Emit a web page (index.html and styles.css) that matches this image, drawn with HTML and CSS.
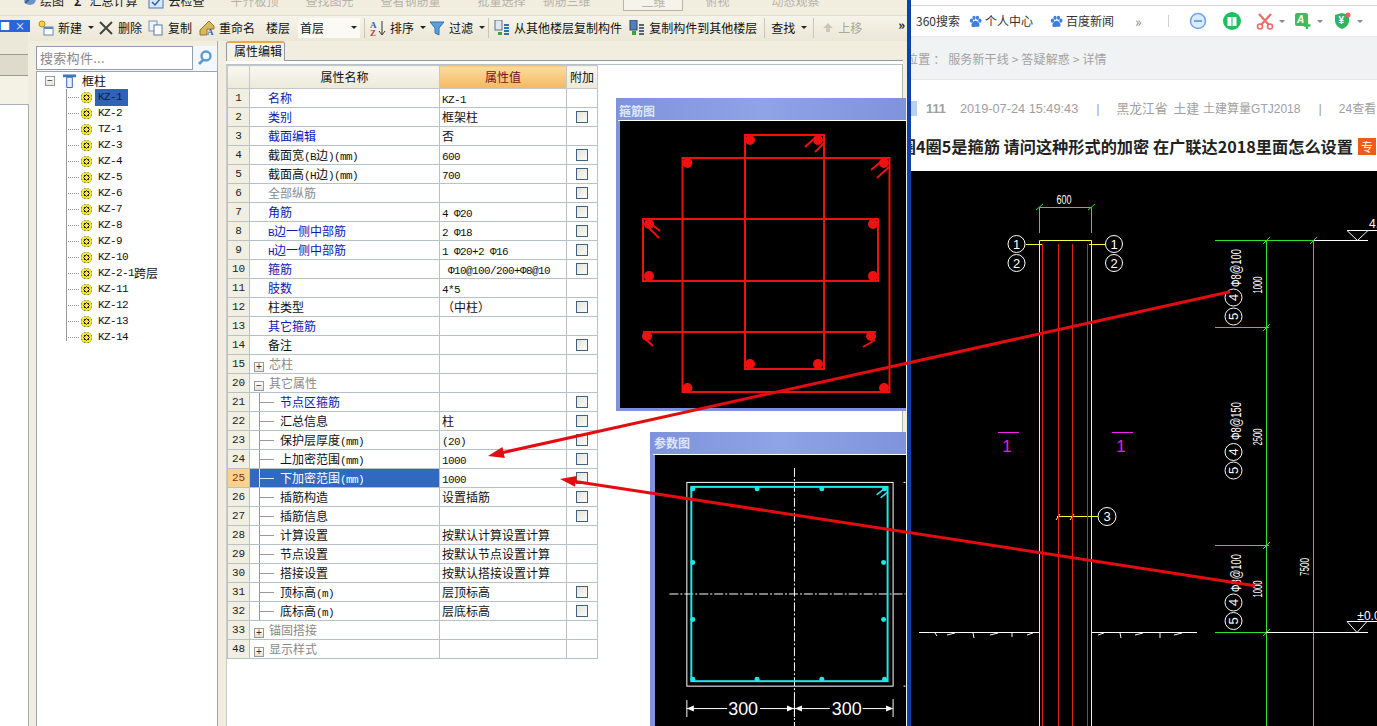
FILE: index.html
```html
<!DOCTYPE html>
<html lang="zh-CN">
<head>
<meta charset="utf-8">
<title>属性编辑</title>
<link rel="stylesheet" href="styles.css">
</head>
<body>
<div class="screen">
  <div class="app">
    <div class="tb1">
      <svg class="ic i1a" viewBox="0 0 16 16"><circle cx="8" cy="6" r="6" fill="#6f93c8"/><path d="M3 10 13 1" stroke="#3a5f96" stroke-width="2"/></svg><span class="t1 m40">绘图</span>
      <span class="t1 sigma">Σ</span><span class="t1">汇总计算</span>
      <svg class="ic i1b" viewBox="0 0 16 16"><rect x="1" y="0" width="14" height="12" fill="#d8e8f8" stroke="#3c78c0"/><path d="M4 6l3 3 5-6" stroke="#2a60b0" stroke-width="1.5" fill="none"/></svg><span class="t1">云检查</span>
      <span class="t1 dim m230">平齐板顶</span><span class="t1 dim m305">查找图元</span><span class="t1 dim m380">查看钢筋量</span><span class="t1 dim m478">批量选择</span><span class="t1 dim m543">钢筋三维</span>
      <span class="view-select">二维</span>
      <span class="t1 dim m705">俯视</span><span class="t1 dim m771">动态观察</span>
    </div>
    <div class="main">
      <aside class="dock">
        <div class="dock-gap"></div>
        <div class="dock-title"><span>■</span><span>×</span></div>
        <div class="dock-a"></div>
        <div class="dock-b"></div>
        <div class="dock-c"></div>
        <div class="dock-white"></div>
      </aside>
      <div class="content">
        <div class="tb2">
          <span class="tool w-new"><svg class="ic" viewBox="0 0 16 16"><circle cx="4" cy="4" r="3" fill="#f4d03f" stroke="#b09020"/><rect x="6" y="7" width="9" height="8" fill="#fff" stroke="#6088b8"/><rect x="6" y="7" width="9" height="2" fill="#6088b8"/></svg>新建<i class="caret"></i></span>
          <span class="tool w-del"><svg class="ic" viewBox="0 0 16 16"><path d="M2 2 14 14M14 2 2 14" stroke="#444" stroke-width="2"/></svg>删除</span>
          <span class="tool w-copy"><svg class="ic" viewBox="0 0 16 16"><rect x="1" y="1" width="8" height="10" fill="#eef3fa" stroke="#7a94b8"/><rect x="6" y="5" width="8" height="10" fill="#fff" stroke="#5a78a8"/></svg>复制</span>
          <span class="tool w-ren"><svg class="ic" viewBox="0 0 16 16"><path d="M1 10 10 1l5 5v3H8v6H1z" fill="#d8b860" stroke="#907830"/><text x="8" y="15" class="ic-text">A</text></svg>重命名</span>
          <span class="tool w-floor">楼层</span>
          <span class="combo">首层<i class="caret"></i></span>
          <i class="sep s-combo"></i>
          <span class="tool w-sort"><svg class="ic" viewBox="0 0 16 16"><text x="0" y="8" class="ic-az">A</text><text x="0" y="16" class="ic-az red">Z</text><path d="M12 1v13M9 11l3 4 3-4" stroke="#333" fill="none"/></svg>排序<i class="caret"></i></span>
          <span class="tool w-filter"><svg class="ic" viewBox="0 0 16 16"><path d="M1 2h14L10 8v7l-4-2V8z" fill="#58a0e0" stroke="#3070b0"/></svg>过滤<i class="caret"></i></span>
          <i class="sep s-filter"></i>
          <span class="tool w-from"><svg class="ic" viewBox="0 0 16 16"><rect x="1" y="0" width="7" height="10" fill="#dfe6f0" stroke="#5a6f90"/><path d="M4 12h4v3H4z" fill="#40a040"/><path d="M10 5h5M10 8h5M10 11h5M10 14h5" stroke="#3070b0" stroke-width="2"/></svg>从其他楼层复制构件</span>
          <span class="tool w-to"><svg class="ic" viewBox="0 0 16 16"><rect x="1" y="0" width="7" height="10" fill="#5080c0" stroke="#345"/><path d="M3 11h4v4H3z" fill="#40a040"/><path d="M10 5h5M10 8h5M10 11h5M10 14h5" stroke="#567" stroke-width="2"/></svg>复制构件到其他楼层</span>
          <i class="sep s-find"></i>
          <span class="tool">查找<i class="caret"></i></span>
          <i class="sep s-up"></i>
          <span class="tool dim w-up"><svg class="ic" viewBox="0 0 16 16"><path d="M8 3l5 5h-3v4H6V8H3z" fill="#ccc8b8"/></svg>上移</span>
          <span class="more">»</span>
        </div>
        <div class="workspace">
          <section class="tree-panel">
            <div class="search"><span class="search-box">搜索构件...</span><svg class="search-ic" viewBox="0 0 16 16"><circle cx="9" cy="6" r="4.5" fill="none" stroke="#5f9bd0" stroke-width="2.4"/><path d="M6 10 2 14" stroke="#5f9bd0" stroke-width="2.6"/></svg></div>
            <div class="tree">
              <div class="tree-root"><span class="box">−</span><svg class="col-ic" viewBox="0 0 16 16"><path d="M1 1h14v3H1z" fill="#3f78c8"/><path d="M5 4h6v11H5z" fill="#e6f0fb" stroke="#2f5fa8"/></svg>框柱</div>
              <ul class="tree-list">
                <li><i class="gear"></i><span class="lat sel">KZ-1</span></li>
                <li><i class="gear"></i><span class="lat">KZ-2</span></li>
                <li><i class="gear"></i><span class="lat">TZ-1</span></li>
                <li><i class="gear"></i><span class="lat">KZ-3</span></li>
                <li><i class="gear"></i><span class="lat">KZ-4</span></li>
                <li><i class="gear"></i><span class="lat">KZ-5</span></li>
                <li><i class="gear"></i><span class="lat">KZ-6</span></li>
                <li><i class="gear"></i><span class="lat">KZ-7</span></li>
                <li><i class="gear"></i><span class="lat">KZ-8</span></li>
                <li><i class="gear"></i><span class="lat">KZ-9</span></li>
                <li><i class="gear"></i><span class="lat">KZ-10</span></li>
                <li><i class="gear"></i><span class="lat">KZ-2-1</span>跨层</li>
                <li><i class="gear"></i><span class="lat">KZ-11</span></li>
                <li><i class="gear"></i><span class="lat">KZ-12</span></li>
                <li><i class="gear"></i><span class="lat">KZ-13</span></li>
                <li><i class="gear"></i><span class="lat">KZ-14</span></li>
              </ul>
            </div>
          </section>
          <section class="prop-panel">
            <div class="tabs"><span class="tab">属性编辑</span></div>
            <div class="tab-body">
              <table class="props">
                <colgroup><col class="c-i"><col class="c-n"><col class="c-v"><col class="c-a"></colgroup>
                <thead><tr><th></th><th>属性名称</th><th class="hot">属性值</th><th>附加</th></tr></thead>
                <tbody>
                  <tr><td class="idx">1</td><td class="nm blue">名称</td><td class="val"><span class="lat">KZ-1</span></td><td></td></tr>
                  <tr><td class="idx">2</td><td class="nm blue">类别</td><td class="val">框架柱</td><td><i class="chk"></i></td></tr>
                  <tr><td class="idx">3</td><td class="nm blue">截面编辑</td><td class="val">否</td><td></td></tr>
                  <tr><td class="idx">4</td><td class="nm">截面宽<span class="lat">(B</span>边<span class="lat">)(mm)</span></td><td class="val"><span class="lat">600</span></td><td><i class="chk"></i></td></tr>
                  <tr><td class="idx">5</td><td class="nm">截面高<span class="lat">(H</span>边<span class="lat">)(mm)</span></td><td class="val"><span class="lat">700</span></td><td><i class="chk"></i></td></tr>
                  <tr><td class="idx">6</td><td class="nm gray">全部纵筋</td><td class="val"></td><td><i class="chk"></i></td></tr>
                  <tr><td class="idx">7</td><td class="nm blue">角筋</td><td class="val"><span class="lat">4 Φ20</span></td><td><i class="chk"></i></td></tr>
                  <tr><td class="idx">8</td><td class="nm blue"><span class="lat">B</span>边一侧中部筋</td><td class="val"><span class="lat">2 Φ18</span></td><td><i class="chk"></i></td></tr>
                  <tr><td class="idx">9</td><td class="nm blue"><span class="lat">H</span>边一侧中部筋</td><td class="val"><span class="lat">1 Φ20+2 Φ16</span></td><td><i class="chk"></i></td></tr>
                  <tr><td class="idx">10</td><td class="nm blue">箍筋</td><td class="val clip"><span class="lat"> Φ10@100/200+Φ8@10</span></td><td><i class="chk"></i></td></tr>
                  <tr><td class="idx">11</td><td class="nm blue">肢数</td><td class="val"><span class="lat">4*5</span></td><td></td></tr>
                  <tr><td class="idx">12</td><td class="nm">柱类型</td><td class="val">（中柱）</td><td><i class="chk"></i></td></tr>
                  <tr><td class="idx">13</td><td class="nm blue">其它箍筋</td><td class="val"></td><td></td></tr>
                  <tr><td class="idx">14</td><td class="nm">备注</td><td class="val"></td><td><i class="chk"></i></td></tr>
                  <tr><td class="idx">15</td><td class="nm gray grp"><span class="box">+</span>芯柱</td><td class="val"></td><td></td></tr>
                  <tr><td class="idx">20</td><td class="nm gray grp"><span class="box">−</span>其它属性</td><td class="val"></td><td></td></tr>
                  <tr><td class="idx">21</td><td class="nm kid blue">节点区箍筋</td><td class="val"></td><td><i class="chk"></i></td></tr>
                  <tr><td class="idx">22</td><td class="nm kid">汇总信息</td><td class="val">柱</td><td><i class="chk"></i></td></tr>
                  <tr><td class="idx">23</td><td class="nm kid">保护层厚度<span class="lat">(mm)</span></td><td class="val"><span class="lat">(20)</span></td><td><i class="chk"></i></td></tr>
                  <tr><td class="idx">24</td><td class="nm kid">上加密范围<span class="lat">(mm)</span></td><td class="val"><span class="lat">1000</span></td><td><i class="chk"></i></td></tr>
                  <tr class="active"><td class="idx">25</td><td class="nm kid">下加密范围<span class="lat">(mm)</span></td><td class="val"><span class="lat">1000</span></td><td><i class="chk"></i></td></tr>
                  <tr><td class="idx">26</td><td class="nm kid">插筋构造</td><td class="val">设置插筋</td><td><i class="chk"></i></td></tr>
                  <tr><td class="idx">27</td><td class="nm kid">插筋信息</td><td class="val"></td><td><i class="chk"></i></td></tr>
                  <tr><td class="idx">28</td><td class="nm kid">计算设置</td><td class="val">按默认计算设置计算</td><td></td></tr>
                  <tr><td class="idx">29</td><td class="nm kid">节点设置</td><td class="val">按默认节点设置计算</td><td></td></tr>
                  <tr><td class="idx">30</td><td class="nm kid">搭接设置</td><td class="val">按默认搭接设置计算</td><td></td></tr>
                  <tr><td class="idx">31</td><td class="nm kid">顶标高<span class="lat">(m)</span></td><td class="val">层顶标高</td><td><i class="chk"></i></td></tr>
                  <tr><td class="idx">32</td><td class="nm kid">底标高<span class="lat">(m)</span></td><td class="val">层底标高</td><td><i class="chk"></i></td></tr>
                  <tr><td class="idx">33</td><td class="nm gray grp"><span class="box">+</span>锚固搭接</td><td class="val"></td><td></td></tr>
                  <tr><td class="idx">48</td><td class="nm gray grp"><span class="box">+</span>显示样式</td><td class="val"></td><td></td></tr>
                </tbody>
              </table>
            </div>
          </section>
        </div>
      </div>
    </div>
  </div>
  <div class="edge"></div>
  <div class="browser">
    <div class="b-top"></div>
    <nav class="bookmarks">
      <span class="bm first">360搜索</span>
      <span class="bm"><svg class="paw" viewBox="0 0 16 16"><ellipse cx="3" cy="7" rx="2" ry="2.6"/><ellipse cx="6.2" cy="3.4" rx="2" ry="2.6"/><ellipse cx="10.4" cy="3.4" rx="2" ry="2.6"/><ellipse cx="13.4" cy="7" rx="2" ry="2.6"/><path d="M8 7c-3 0-5 3-5 5.5S5 15 8 14.500 13 15 13 12.500 11 7 8 7z"/></svg>个人中心</span>
      <span class="bm bm3"><svg class="paw" viewBox="0 0 16 16"><ellipse cx="3" cy="7" rx="2" ry="2.6"/><ellipse cx="6.2" cy="3.4" rx="2" ry="2.6"/><ellipse cx="10.4" cy="3.4" rx="2" ry="2.6"/><ellipse cx="13.4" cy="7" rx="2" ry="2.6"/><path d="M8 7c-3 0-5 3-5 5.5S5 15 8 14.500 13 15 13 12.500 11 7 8 7z"/></svg>百度新闻</span>
      <span class="chev">»</span>
      <i class="bm-sep"></i>
      <svg class="bi bi1" viewBox="0 0 18 18"><circle cx="9" cy="9" r="7.500" fill="#dcebfb" stroke="#6aa5e6" stroke-width="1.500"/><path d="M5 9h8" stroke="#6aa5e6" stroke-width="2"/></svg>
      <svg class="bi bi2" viewBox="0 0 18 18"><circle cx="9" cy="9" r="9" fill="#19c15f"/><path d="M4.500 5h4v9h-4zM9.500 5h4v9h-4z" fill="#fff"/></svg>
      <svg class="bi bi3" viewBox="0 0 18 18"><path d="M3 2l10 11M15 2 5 13" stroke="#f06a6a" stroke-width="2.200"/><circle cx="4" cy="14.500" r="2.500" fill="none" stroke="#f06a6a" stroke-width="1.600"/><circle cx="14" cy="14.500" r="2.500" fill="none" stroke="#f06a6a" stroke-width="1.600"/></svg><i class="caret g"></i>
      <svg class="bi bi4" viewBox="0 0 18 18"><rect x="1" y="1" width="13" height="13" rx="2" fill="#43b85c"/><text x="3" y="11" class="ic-a">A</text><path d="M13 10v7M9.500 13.500h7" stroke="#43b85c" stroke-width="2.400"/></svg><i class="caret g"></i>
      <svg class="bi bi5" viewBox="0 0 18 18"><path d="M1 3 8 1l7 2v6c0 4-4 7-7 8-3-1-7-4-7-8z" fill="#2fb45a"/><text x="4.500" y="12" class="ic-y">¥</text><circle cx="14" cy="3" r="2.500" fill="#f0605a"/></svg><i class="caret g"></i>
    </nav>
    <div class="crumbs"><span class="crumb-clip">位置 ： 服务新干线 &gt; 答疑解惑 &gt; 详情</span></div>
    <div class="info">
      <span class="bookmark-ic"></span><span class="i-user">111</span><span class="i-date">2019-07-24 15:49:43</span><span class="i-bar">|</span><span class="i-area">黑龙江省</span><span class="i-tag">土建</span><span class="i-tag2">土建算量GTJ2018</span><span class="i-bar b2">|</span><span class="i-views">24查看</span>
    </div>
    <h1 class="q-title"><span>圈4圈5是箍筋 请问这种形式的加密 在广联达2018里面怎么设置</span><b class="badge">专</b></h1>
    <div class="cad">
      <svg class="cad-svg" viewBox="911 171 466 555">
        <g class="g-green">
          <path d="M1039.500 207.500H1091.500M1039.500 207.500V233M1091.500 207.500V233"/>
          <path d="M1036 210l7-6M1088 210l7-6"/>
          <path d="M1215 240.500H1313.500M1266.500 240.500V726M1313.500 240.500V726M1215 327.500H1269M1215 545.500H1269M1215 632.500H1266.500"/>
          <path d="M1263 244l7-7M1310 244l7-7M1263 331l7-7M1263 549l7-7M1263 636l7-7"/>
        </g>
        <g class="g-yellow">
          <path d="M1039.500 240.500H1091.500M1039.500 240.500V726M1091.500 240.500V726"/>
          <path d="M1026 244.500H1042M1089 244.500H1105M1057 516.500H1098M1056 520l4-6M1070 520l4-6"/>
        </g>
        <path class="g-red" d="M1042.500 244V726M1058.500 244V726M1072.500 244V726M1087.500 244V726"/>
        <g class="g-white">
          <circle cx="1016.500" cy="244" r="8.500"/><circle cx="1016.500" cy="263" r="8.500"/><circle cx="1114" cy="244" r="8.500"/><circle cx="1114" cy="263" r="8.500"/>
          <circle cx="1107" cy="516.500" r="9"/>
          <circle cx="1233.500" cy="297.500" r="8.500"/><circle cx="1233.500" cy="316.500" r="8.500"/>
          <circle cx="1233.500" cy="452" r="8.500"/><circle cx="1233.500" cy="470.500" r="8.500"/>
          <circle cx="1233.500" cy="602.500" r="8.500"/><circle cx="1233.500" cy="621" r="8.500"/>
          <path d="M1314 240.500H1368M1347 230.500H1377M1347 230.500 1357.500 240.500 1368 230.500"/>
          <path d="M1266.500 632.500H1368M1347 621.500H1377M1347 621.500 1357 632.500 1367 621.500"/>
          <path d="M919 632.500H1039M1092 632.500H1197"/>
          <path d="M935 633l2 3M947 635l8-2M973 633l1 5M990 635l8-2M1012 633l0 4M1027 635l6-2M1098 635l6-2M1120 633l1 5M1135 635l8-2M1160 633l0 5M1174 635l8-2"/>
        </g>
        <path class="g-mag" d="M998 432.500H1019M1112 432.500H1133"/>
        <text x="1007" y="452" class="t-mag">1</text>
        <text x="1121" y="452" class="t-mag">1</text>
        <g class="t-cad">
          <text x="1064" y="204" class="t-s" textLength="15" lengthAdjust="spacingAndGlyphs">600</text>
          <text x="1016.500" y="248.500">1</text><text x="1016.500" y="267.500">2</text><text x="1114" y="248.500">1</text><text x="1114" y="267.500">2</text>
          <text x="1107" y="521">3</text>
          <text x="1374" y="228" class="t-s">4.</text>
          <text x="1369" y="620" class="t-s">±0.0</text>
          <text transform="translate(1241 268) rotate(-90)" class="t-l" textLength="38" lengthAdjust="spacingAndGlyphs">Φ8@100</text>
          <text transform="translate(1241 421) rotate(-90)" class="t-l" textLength="38" lengthAdjust="spacingAndGlyphs">Φ8@150</text>
          <text transform="translate(1241 573) rotate(-90)" class="t-l" textLength="38" lengthAdjust="spacingAndGlyphs">Φ8@100</text>
          <text transform="translate(1262 285) rotate(-90)" class="t-s" textLength="17" lengthAdjust="spacingAndGlyphs">1000</text>
          <text transform="translate(1262 437) rotate(-90)" class="t-s" textLength="17" lengthAdjust="spacingAndGlyphs">2500</text>
          <text transform="translate(1262 589) rotate(-90)" class="t-s" textLength="17" lengthAdjust="spacingAndGlyphs">1000</text>
          <text transform="translate(1309 567) rotate(-90)" class="t-s" textLength="18" lengthAdjust="spacingAndGlyphs">7500</text>
          <text transform="translate(1238 297.500) rotate(-90)">4</text>
          <text transform="translate(1238 316.500) rotate(-90)">5</text>
          <text transform="translate(1238 452) rotate(-90)">4</text>
          <text transform="translate(1238 470.500) rotate(-90)">5</text>
          <text transform="translate(1238 602.500) rotate(-90)">4</text>
          <text transform="translate(1238 621) rotate(-90)">5</text>
        </g>
      </svg>
    </div>
  </div>

  <div class="win win-a">
    <div class="win-title">箍筋图</div>
    <svg class="win-draw" viewBox="620 121 286 287">
      <g class="rebar">
        <rect x="682.500" y="158" width="207" height="234"/>
        <rect x="745" y="135" width="79" height="234"/>
        <rect x="643" y="219" width="235" height="62"/>
        <path d="M643 332H876"/>
        <path class="hook" d="M805 147l12-11M815 152l9-9M871 170l13-11M877 178l12-11M650 223l10 8M647 226l12 12M643 337l10 9M875 340l-12 7"/>
      </g>
      <g class="rebar-dots">
        <circle cx="750" cy="140" r="5"/><circle cx="818" cy="140" r="5"/><circle cx="687.500" cy="163" r="5"/><circle cx="884" cy="163" r="5"/>
        <circle cx="649" cy="224" r="5"/><circle cx="873" cy="224" r="5"/><circle cx="649" cy="276" r="5"/><circle cx="873" cy="276" r="5"/>
        <circle cx="647" cy="336" r="5"/><circle cx="871" cy="336" r="5"/><circle cx="750" cy="364" r="5"/><circle cx="818" cy="364" r="5"/><circle cx="687.500" cy="388" r="5"/><circle cx="884" cy="388" r="5"/>
      </g>
    </svg>
  </div>

  <div class="win win-b">
    <div class="win-title">参数图</div>
    <svg class="win-draw" viewBox="655 454 251 272">
      <rect class="w-line" x="686.500" y="481.500" width="207" height="204.500"/>
      <path class="w-dash" d="M794.500 467V726M669 593.500H906"/>
      <path class="w-line" d="M904 481.500h2M904 686h2M686.500 700V717M893.500 699V717M794.500 700V717M686.500 708.500H727M760 708.500H794M794 708.500H830M863 708.500H893"/>
      <path class="w-fill" d="M686.500 708.500l7-3v6zM794 708.500l-7-3v6zM795 708.500l7-3v6zM893.500 708.500l-7-3v6z"/>
      <rect class="c-line" x="691" y="486" width="197" height="195"/>
      <path class="c-hook" d="M877 494l10-8M881 497l7-6"/>
      <g class="c-dots">
        <circle cx="692.500" cy="488" r="2.500"/><circle cx="757" cy="488" r="2.500"/><circle cx="822" cy="488" r="2.500"/><circle cx="885" cy="488" r="2.500"/>
        <circle cx="692.500" cy="562" r="2.500"/><circle cx="884" cy="562" r="2.500"/><circle cx="692.500" cy="619" r="2.500"/><circle cx="884" cy="619" r="2.500"/>
        <circle cx="692.500" cy="679" r="2.500"/><circle cx="757" cy="679" r="2.500"/><circle cx="822" cy="679" r="2.500"/><circle cx="885" cy="679" r="2.500"/>
      </g>
      <text x="743" y="715" class="t-dim">300</text>
      <text x="847" y="715" class="t-dim">300</text>
    </svg>
  </div>

  <svg class="arrows" viewBox="0 0 1377 726">
    <path d="M1230 291.700 503 452.500M1255 585.700 575 481.400"/>
    <polygon points="488,456 504.800,457.900 502.400,447.100"/>
    <polygon points="560,479 576.600,476 575,486.800"/>
  </svg>
</div>
</body>
</html>
```
FILE: styles.css
```css
* { box-sizing: border-box; }
html, body { margin: 0; padding: 0; }
body { background: #fff; font: 12px/16px "Noto Sans CJK SC", "Liberation Sans", sans-serif; color: #111; }
i { font-style: normal; }

.screen { position: relative; display: flex; width: 1377px; height: 726px; overflow: hidden; }
.app { width: 907px; flex: none; display: flex; flex-direction: column; background: #f1eee0; }
.edge { width: 4px; flex: none; background: #1040ac; }
.browser { flex: 1; min-width: 0; display: flex; flex-direction: column; background: #fff; }

/* top toolbar, cut by the window's top edge */
.tb1 { height: 16px; flex: none; display: flex; align-items: flex-end; padding: 0 0 6px 22px; background: #f1eee0; overflow: hidden; border-bottom: 1px solid #e2decb; }
.t1 { flex: none; white-space: nowrap; color: #222; }
.t1.dim { color: #b5b3a8; }
.ic { width: 16px; height: 16px; flex: none; }
.i1a { margin-right: 2px; }
.i1b { margin-left: 11px; margin-bottom: -3px; }
.sigma { margin: 0 8px 0 10px; font-weight: 700; }
.i1b + .t1 { margin-left: 4px; }
.m230 { margin-left: 26px; }
.m305 { margin-left: 27px; }
.m380 { margin-left: 27px; }
.m478 { margin-left: 37px; }
.m543 { margin-left: 17px; }
.view-select { width: 60px; flex: none; margin-left: 32px; margin-bottom: -2px; padding-left: 18px; border: 1px solid #b8b5a8; color: #b5b3a8; background: #f6f4ea; }
.m705 { margin-left: 23px; }
.m771 { margin-left: 42px; }

.main { flex: 1; min-height: 0; display: flex; }
.dock { width: 30px; flex: none; display: flex; flex-direction: column; background: #f1eee0; }
.dock-gap { height: 4px; }
.dock-title { height: 12px; display: flex; justify-content: space-between; padding: 0 5px 0 0; background: #2a66d8; color: #fff; font-size: 10px; line-height: 12px; overflow: hidden; }
.dock-a { height: 23px; width: 28px; background: #ebe8da; border-bottom: 1px solid #9c9a8c; }
.dock-b { height: 21px; width: 28px; background: #dedbcd; border-bottom: 1px solid #9c9a8c; }
.dock-c { height: 28px; width: 28px; background: #f4f1e5; }
.dock-white { flex: 1; width: 29px; background: #fff; border-top: 1px solid #aab0b6; border-right: 1px solid #a8adb0; }

.content { flex: 1; min-width: 0; display: flex; flex-direction: column; }
.tb2 { height: 25px; flex: none; display: flex; align-items: center; padding: 0 0 2px 8px; background: linear-gradient(#f6f4ea, #ebe7d6); white-space: nowrap; }
.tool { display: inline-flex; align-items: center; gap: 4px; flex: none; }
.tool.dim { color: #aaa89c; }
.caret { display: inline-block; flex: none; width: 0; height: 0; margin-left: 2px; border: 3px solid transparent; border-top: 3px solid #222; border-bottom: 0; }
.caret.g { border-top-color: #888; margin: 0 0 0 5px; }
.w-del { margin-left: 4px; }
.w-copy { margin-left: 6px; }
.w-ren { margin-left: 7px; }
.w-floor { margin-left: 11px; }
.combo { width: 62px; height: 20px; flex: none; margin-left: 8px; display: flex; align-items: center; justify-content: space-between; padding: 0 3px 0 2px; background: #fbfaf4; }
.sep { width: 1px; height: 20px; flex: none; margin: 0 2px 0 4px; background: #c9c6b6; }
.w-sort { margin-left: 3px; }
.w-filter { margin-left: 3px; }
.s-filter { margin-left: 3px; }
.w-from { margin-left: 3px; }
.w-to { margin-left: 7px; }
.s-find { margin: 0 6px 0 7px; }
.s-up { margin: 0 4px 0 6px; }
.w-up { margin-left: 2px; gap: 2px; }
.more { flex: none; margin-left: 36px; font-weight: 700; font-size: 13px; margin-top: -6px; }
.ic-text { font: 700 9px "Liberation Serif", serif; fill: #2a60b0; }
.ic-az { font: 700 9px "Liberation Serif", serif; fill: #2a60b0; }
.ic-az.red { fill: #c04040; }

.workspace { flex: 1; min-height: 0; display: flex; background: #f1eee0; }
.tree-panel { width: 182px; flex: none; margin-left: 6px; display: flex; flex-direction: column; background: #fff; }
.search { height: 30px; flex: none; display: flex; padding-top: 5px; background: linear-gradient(#f1eee0 5px, #f4f7fb 5px); border-right: 1px solid #a8adb0; }
.search-box { width: 157px; height: 24px; padding-left: 3px; background: #fff; border: 1px solid #8e9eae; color: #888; font-size: 13px; line-height: 22px; letter-spacing: .3px; }
.search-ic { width: 16px; height: 16px; margin: 4px 0 0 4px; }
.tree { flex: 1; background: #fff; border-top: 1px solid #9aa7b2; border-left: 1px solid #9aa7b2; border-right: 1px solid #9aa7b2; padding: 0 0 0 8px; }
.tree-root { display: flex; align-items: center; height: 17px; font-size: 12px; }
.box { display: inline-flex; flex: none; align-items: center; justify-content: center; width: 10px; height: 10px; border: 1px solid #999; background: linear-gradient(#fff, #e4e2d8); color: #333; font: 10px/10px "Liberation Sans", sans-serif; }
.col-ic { width: 15px; height: 16px; margin: 0 5px 0 7px; }
.tree-list { list-style: none; margin: 0 0 0 21px; padding: 0; font-size: 12px; background: linear-gradient(#999, #999) 0 0 / 1px 252px no-repeat; }
.tree-list li { display: flex; align-items: center; height: 16px; padding-left: 15px; background: repeating-linear-gradient(90deg, #999 0 1px, transparent 1px 2px) 0 50% / 14px 1px no-repeat; }
.gear { width: 11px; height: 11px; margin-right: 6px; flex: none; border-radius: 50%; background: radial-gradient(circle, #f8ea20 0 26%, #222 28% 38%, #f8ea20 40% 64%, #443 68%); }
.lat { font-family: "Liberation Mono", "Noto Sans CJK SC", monospace; font-size: 11px; letter-spacing: -.6px; line-height: 1; white-space: pre; }
.sel { margin: -2px 0 -2px -3px; padding: 3px 6px 3px 3px; background: #2f63b8; color: #12203a; }

.prop-panel { flex: 1; min-width: 0; margin-left: 8px; display: flex; flex-direction: column; margin-right: 4px; background: #fff; }
.tabs { height: 20px; flex: none; display: flex; align-items: flex-end; border-bottom: 1px solid #8f9aa4; background: #f1eee0; }
.tab { width: 59px; height: 20px; padding: 0 0 0 7px; background: #f3f3ea; border: 1px solid #8f9aa4; border-top: 2px solid #f0a83c; border-bottom: 0; margin-bottom: -1px; border-radius: 3px 3px 0 0; line-height: 16px; }
.tab-body { flex: 1; margin-top: 3px; padding: 0; background: #fff; border-top: 1px solid #b8c0c8; border-left: 1px solid #c5cbd0; border-right: 1px solid #aeb5bb; }
.props { table-layout: fixed; width: 370px; border-collapse: collapse; border: 1px solid #b9c0c6; border-left: 0; }
.c-i { width: 22px; }
.c-n { width: 190px; }
.c-v { width: 127px; }
.c-a { width: 31px; }
.props th { height: 23px; padding: 0; background: linear-gradient(#f9f8f0, #ece9da); border: 1px solid #c4c8c8; font-weight: 400; text-align: center; line-height: 16px; }
.props th.hot { background: linear-gradient(#fbdc9e, #f5b860); color: #7a0e20; }
.props td { height: 19px; padding: 0; border: 1px solid #b9c0c6; overflow: hidden; white-space: nowrap; line-height: 14px; }
.props td.idx { background: #f1eee2; text-align: center; font-family: "Liberation Mono", monospace; font-size: 11px; color: #222; }
.props td.nm { padding-left: 18px; }
.props td.grp { padding-left: 4px; color: #8a8a8a; }
.grp .box { margin-right: 5px; vertical-align: -1px; }
.blue { color: #0c18b4; }
.gray { color: #8a8a8a; }
.props td.kid { padding-left: 30px; background: linear-gradient(#999, #999) 9px 0 / 1px 100% no-repeat, linear-gradient(#999, #999) 10px 50% / 14px 1px no-repeat; }
.props td.val { padding-left: 2px; }
.chk { display: block; width: 12px; height: 12px; margin: 0 auto; border: 1px solid #3e6282; background: linear-gradient(135deg, #e5e3d6, #fbfbf8); }
.active td.idx { background: #fbd38e; color: #8a3010; }
.props .active td.nm.kid { background: linear-gradient(#dfe8f8, #dfe8f8) 9px 0 / 1px 100% no-repeat, linear-gradient(#dfe8f8, #dfe8f8) 10px 50% / 14px 1px no-repeat, #3168c0; color: #fff; }

/* browser */
.b-top { height: 6px; flex: none; background: #fff; border-bottom: 1px solid #d9dadb; }
.bookmarks { height: 30px; flex: none; display: flex; align-items: center; padding-left: 5px; color: #333; font-size: 12px; white-space: nowrap; overflow: hidden; }
.bm { display: inline-flex; align-items: center; gap: 3px; flex: none; }
.bm.first { width: 53px; }
.bm3 { margin-left: 17px; }
.paw { width: 13px; height: 13px; fill: #3d7fe0; }
.chev { margin-left: 21px; color: #888; font-size: 14px; }
.bm-sep { width: 1px; height: 12px; margin-left: 26px; background: #d0d0d0; flex: none; }
.bi { width: 18px; height: 18px; flex: none; }
.bi1 { margin-left: 20px; }
.bi2 { margin-left: 16px; }
.bi3 { margin-left: 15px; }
.bi4 { margin-left: 9px; }
.bi5 { margin-left: 11px; }
.ic-a { font: italic 700 10px "Liberation Sans", sans-serif; fill: #fff; }
.ic-y { font: 700 10px "Liberation Sans", sans-serif; fill: #fff; }
.crumbs { height: 44px; flex: none; background: #f0f2f4; border-top: 1px solid #e4e6e8; border-bottom: 1px solid #e6e7e9; color: #a2a2a2; line-height: 43px; overflow: hidden; white-space: nowrap; }
.crumb-clip { display: block; margin-left: -5px; letter-spacing: .15px; }
.info { height: 55px; flex: none; display: flex; align-items: center; padding-top: 2px; color: #a0a0a0; font-size: 12.750px; white-space: nowrap; overflow: hidden; font-family: "Liberation Sans", "Noto Sans CJK SC", sans-serif; }
.bookmark-ic { width: 6px; height: 15px; flex: none; background: #b7d2ee; }
.i-user { margin-left: 9px; font-weight: 700; }
.i-date { margin-left: 14px; }
.i-bar { margin-left: 18px; }
.i-area { margin-left: 17px; }
.i-tag { margin-left: 6px; }
.i-tag2 { margin-left: 4px; font-size: 12px; }
.i-views { margin-left: 17px; font-size: 12px; }
.q-title { height: 36px; flex: none; margin: 0; display: flex; justify-content: flex-end; align-items: center; gap: 5px; padding: 0 1px 14px 0; overflow: hidden; white-space: nowrap; font: 700 16.200px/20px "Noto Sans CJK SC", sans-serif; color: #222; }
.q-title span { flex: none; }
.badge { flex: none; width: 18px; height: 17px; background: #ee5b14; color: #fff; font-size: 12px; line-height: 17px; text-align: center; font-weight: 400; }
.cad { flex: 1; min-height: 0; background: #000; }
.cad-svg { display: block; width: 466px; height: 555px; }
.g-green path { fill: none; stroke: #30e030; stroke-width: 1; }
.g-yellow path { fill: none; stroke: #ffff40; stroke-width: 1; }
.g-red { fill: none; stroke: #e02010; stroke-width: 1; }
.g-white circle, .g-white path { fill: none; stroke: #fff; stroke-width: 1; }
.g-mag { fill: none; stroke: #ff20ff; }
.t-mag { font: 17px "Liberation Sans", sans-serif; fill: #e020e0; text-anchor: middle; }
.t-cad text { font: 13px "Liberation Sans", sans-serif; fill: #fff; text-anchor: middle; }
.t-cad text.t-s { font-size: 12px; }
.t-cad text.t-l { font-size: 14px; }

/* floating windows */
.win { position: absolute; display: flex; flex-direction: column; background: #7e93dc; }
.win-a { left: 616px; top: 98px; width: 290px; height: 313px; padding: 0 0 3px 4px; }
.win-a .win-title { padding-top: 5px; }
.win-b { left: 650px; top: 432px; width: 256px; height: 294px; padding-left: 5px; }
.win-title { height: 23px; flex: none; margin-left: -2px; padding: 3px 0 0 1px; background: linear-gradient(90deg, #7e93dc, #8ea4e6 50%, #7e93dc); border-bottom: 1px solid #fff; color: #dfe6fb; font-size: 12px; font-weight: 700; line-height: 16px; }
.win-draw { display: block; flex: 1; min-height: 0; width: 100%; background: #000; }
.rebar rect, .rebar path { fill: none; stroke: #f01010; stroke-width: 2; }
.rebar-dots circle { fill: #f01010; }
.w-line { fill: none; stroke: #fff; stroke-width: 1; }
.w-dash { fill: none; stroke: #fff; stroke-dasharray: 9 2 2 2; }
.w-fill { fill: #fff; }
.c-line { fill: none; stroke: #20e8e8; stroke-width: 2; }
.c-hook { fill: none; stroke: #20e8e8; stroke-width: 1.500; }
.c-dots circle { fill: #20e8e8; }
.t-dim { font: 18px "Liberation Sans", sans-serif; fill: #fff; text-anchor: middle; }

.arrows { position: absolute; left: 0; top: 0; width: 1377px; height: 726px; pointer-events: none; }
.arrows path { fill: none; stroke: #e40c10; stroke-width: 3; }
.arrows polygon { fill: #e40c10; }
```
